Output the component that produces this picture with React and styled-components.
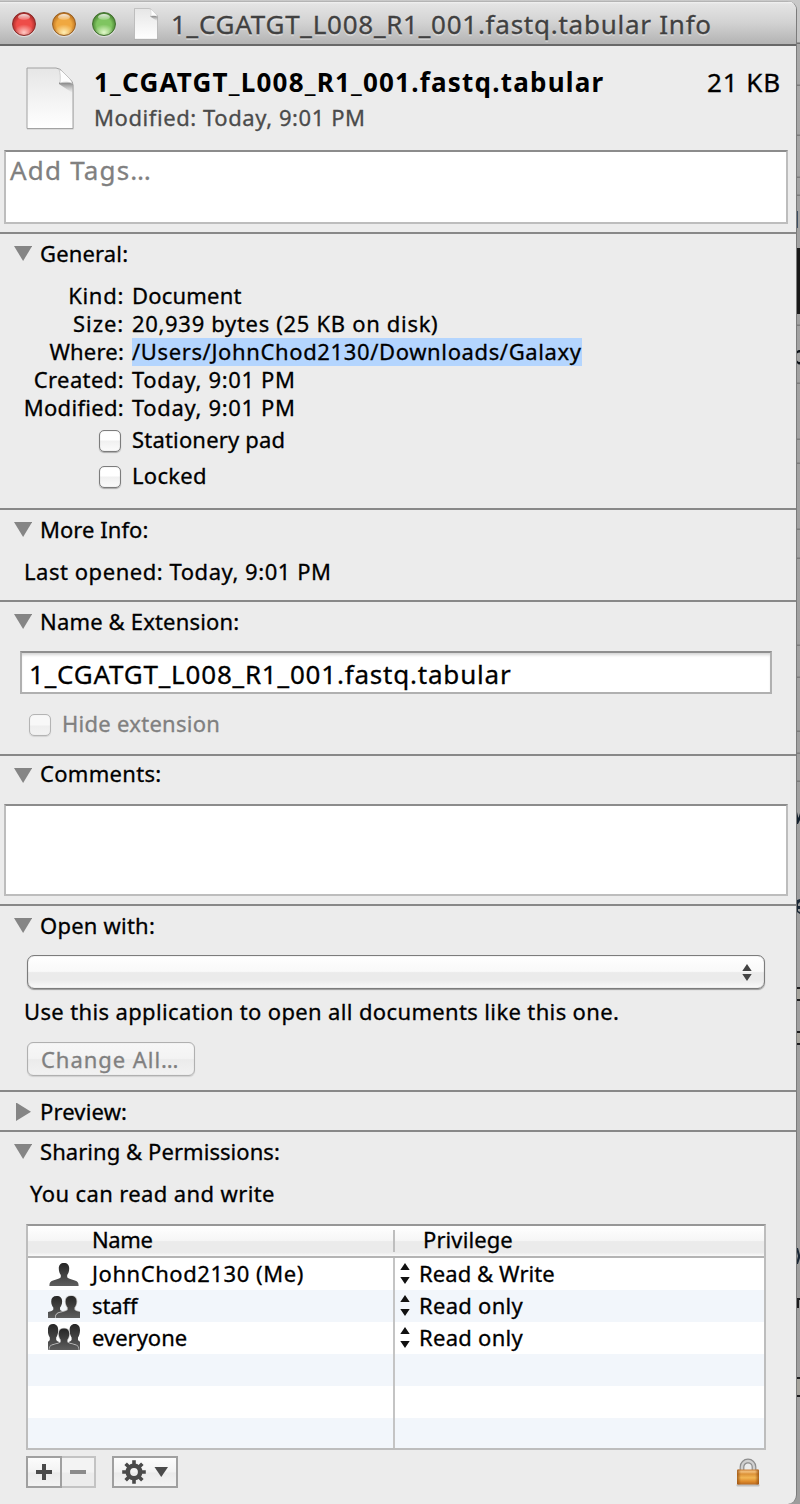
import React from 'react';
import styled, { createGlobalStyle, css } from 'styled-components';

const GlobalStyle = createGlobalStyle`
  * { box-sizing: border-box; }
  body { margin: 0; background: #c6c6c6; }
`;

const Desktop = styled.div`
  display: flex;
  width: 800px;
  height: 1504px;
  overflow: hidden;
  padding-top: 1px;
  background: linear-gradient(#c9c9c9 0, #c4c4c4 42px, #a9a9a9 44px, #a2a2a2 200px, #9d9d9d 100%);
  font-family: 'Noto Sans', 'Open Sans', sans-serif;
  color: #000;
  -webkit-text-stroke: 0.3px;
`;

const Window = styled.main`
  flex: none;
  display: flex;
  flex-direction: column;
  width: 797px;
  height: 1503px;
  background: #ececec;
  border-right: 1px solid #7b7b7b;
  border-radius: 0 9px 9px 0;
  overflow: hidden;
`;

const Behind = styled.svg`
  flex: none;
  display: block;
  margin-top: -1px;
`;

const Text = styled.span`
  display: block;
  white-space: nowrap;
  font-size: ${(p) => (p.$large ? 26 : 22)}px;
  line-height: ${(p) => (p.$large ? 32 : 28)}px;
  letter-spacing: ${(p) => p.$track || 0}px;
  color: ${(p) => p.$color || 'inherit'};
`;

const TitleBar = styled.header`
  flex: none;
  display: flex;
  height: 45px;
  padding-left: 12px;
  border-top: 1px solid #b4b4b4;
  border-bottom: 2px solid #686868;
  background: linear-gradient(#f2f2f2 0, #e4e4e4 2px, #d2d2d2 50%, #b3b3b3 100%);
`;

const Lights = styled.div`
  display: flex;
  gap: 16px;
  margin-top: 10px;
  width: 122px;
`;

const lights = {
  red: ['#8c2a28', '#a92d2b', '#ee4c48', '#ffc9c4'],
  amber: ['#986023', '#bd7422', '#f0a840', '#ffeeb4'],
  green: ['#42702f', '#4b8534', '#7fc560', '#e2f8cb'],
};

const Light = styled.i`
  position: relative;
  width: 24px;
  height: 24px;
  border-radius: 50%;
  border: 1px solid ${(p) => lights[p.$tone][0]};
  background: radial-gradient(ellipse 10px 8px at 50% 88%, ${(p) => lights[p.$tone][3]} 0, transparent 100%),
    radial-gradient(circle at 50% 55%, ${(p) => lights[p.$tone][2]} 45%, ${(p) => lights[p.$tone][1]} 72%);
  box-shadow: 0 1px 1px rgba(255, 255, 255, 0.6);

  &::before {
    content: '';
    position: absolute;
    left: 5px;
    top: 1px;
    width: 12px;
    height: 6px;
    border-radius: 50%;
    background: linear-gradient(rgba(255, 255, 255, 0.85), rgba(255, 255, 255, 0.15));
  }
`;

const TitleText = styled(Text)`
  margin: 6px 0 0 13px;
  color: #414141;
  text-shadow: 0 2px 0 rgba(255, 255, 255, 0.35);
`;

const TitleIcon = styled.div`
  margin-top: 6px;
`;

const Summary = styled.section`
  display: flex;
  height: 104px;
  padding: 20px 15px 0 26px;
`;

const SummaryIcon = styled.div`
  margin-top: 1px;
  width: 68px;
`;

const SummaryText = styled.div`
  flex: 1;
  display: flex;
  flex-direction: column;
  gap: 5px;
`;

const FileName = styled(Text)`
  font-weight: 700;
  -webkit-text-stroke: 0;
`;

const TextArea = styled.div`
  height: ${(p) => p.$height}px;
  margin: ${(p) => p.$top || 0}px 8px 0 4px;
  padding: 2px 4px;
  background: #fff;
  border: 2px solid #bdbdbd;
  border-top-color: #8c8c8c;
`;

const Section = styled.section`
  flex: none;
  height: ${(p) => p.$height}px;
  margin-top: ${(p) => p.$gap || 0}px;
  padding-top: 5px;
  border-top: 2px solid #888;
`;

const HeadingRow = styled.div`
  display: flex;
  gap: 8px;
  height: 28px;
  padding-left: 14px;

  svg { flex: none; margin-top: 6px; }
  span { margin-top: ${(p) => p.$raise || 0}px; }
`;

const Fields = styled.dl`
  display: grid;
  grid-template-columns: 124px auto;
  justify-content: start;
  justify-items: start;
  column-gap: 8px;
  grid-auto-rows: 28px;
  margin: 15px 0 0;
`;

const Label = styled(Text).attrs({ as: 'dt' })`
  justify-self: end;
  line-height: 26px;
`;

const Value = styled(Text).attrs({ as: 'dd' })`
  margin: 0;
  height: 28px;
  line-height: 26px;
  ${(p) => p.$selected && css`background: #b4d5fe;`}
`;

const CheckRow = styled.label`
  display: flex;
  gap: 11px;
  height: 36px;
  padding: 3px 0 0 ${(p) => p.$indent}px;
`;

const CheckBox = styled.i`
  width: 22px;
  height: 22px;
  margin-top: 5px;
  border: 1px solid ${(p) => (p.$disabled ? '#b4b4b4' : '#7c7c7c')};
  border-radius: 5px;
  background: ${(p) =>
    p.$disabled
      ? 'linear-gradient(#f8f8f8 50%, #eee 55%, #f3f3f3)'
      : 'linear-gradient(#fff 45%, #f0f0f0 50%, #fbfbfb)'};
  box-shadow: 0 1px 1px rgba(0, 0, 0, ${(p) => (p.$disabled ? 0.1 : 0.28)}),
    inset 0 0 1px rgba(0, 0, 0, ${(p) => (p.$disabled ? 0.15 : 0.35)});
`;

const Line = styled(Text)`
  margin: ${(p) => p.$top}px 0 0 ${(p) => p.$left || 24}px;
`;

const NameField = styled.div`
  width: 752px;
  height: 43px;
  margin: 16px 0 12px 20px;
  padding: 5px 7px;
  background: #fff;
  border: 2px solid #b0b0b0;
  border-top-color: #8f8f8f;
  box-shadow: inset 0 3px 3px -1px rgba(0, 0, 0, 0.17);
`;

const PopUp = styled.div`
  display: flex;
  justify-content: flex-end;
  align-items: center;
  width: 738px;
  height: 34px;
  margin: 16px 0 0 27px;
  padding-right: 12px;
  border: 1px solid #7c7c7c;
  border-radius: 7px;
  background: linear-gradient(#fff 0, #f9f9f9 48%, #ebebeb 52%, #ebebeb 75%, #fafafa 100%);
  box-shadow: 0 1px 1px rgba(0, 0, 0, 0.35), inset 0 0 1px rgba(0, 0, 0, 0.45);
`;

const PushButton = styled.button`
  display: block;
  width: 168px;
  height: 34px;
  margin: 17px 0 0 27px;
  padding: 0 0 0 13px;
  text-align: left;
  font-family: inherit;
  border: 1px solid #b0b0b0;
  border-radius: 6px;
  background: linear-gradient(#f7f7f7 0, #f3f3f3 48%, #ebebeb 52%, #f2f2f2 100%);
  box-shadow: 0 1px 1px rgba(0, 0, 0, 0.12), inset 0 0 1px rgba(0, 0, 0, 0.2);
`;

const Table = styled.div`
  width: 740px;
  height: 226px;
  margin: 17px 0 6px 26px;
  border: 2px solid #bdbdbd;
  border-top-color: #979797;
  overflow: hidden;
  background: #fff;
`;

const TableHead = styled.div`
  display: flex;
  height: 32px;
  border-bottom: 2px solid #b4b4b4;
  background: linear-gradient(#fff 0, #f6f6f6 48%, #ebebeb 52%, #ebebeb 88%, #fafafa 100%);

  span { line-height: 26px; }
`;

const HeadName = styled.div`
  width: 367px;
  height: 22px;
  margin-top: 4px;
  padding-left: 64px;
  border-right: 2px solid #bebebe;

  span { margin-top: -4px; }
`;

const HeadPrivilege = styled.div`
  padding-left: 28px;
`;

const Row = styled.div`
  display: flex;
  height: 32px;
  background: ${(p) => (p.$alt ? '#f2f6fb' : '#fff')};

  span { margin-top: 1px; }
`;

const NameCell = styled.div`
  display: flex;
  width: 367px;
  padding-left: 20px;
  border-right: 2px solid #c4c4c4;

  svg { flex: none; width: 32px; margin-right: 12px; }
`;

const PrivilegeCell = styled.div`
  display: flex;
  padding-left: 5px;
  gap: 9px;

  svg { margin-top: 5px; }
`;

const Footer = styled.div`
  display: flex;
  height: 34px;
  padding: 0 35px 0 26px;
`;

const ToolButton = styled.button`
  display: flex;
  align-items: center;
  justify-content: center;
  width: ${(p) => p.$width}px;
  height: 32px;
  padding: 0;
  border: 2px solid ${(p) => (p.$dim ? '#c3c3c3' : '#a0a0a0')};
  ${(p) => p.$dim && css`border-left: 0;`}
  margin-right: ${(p) => p.$after || 0}px;
  background: ${(p) =>
    p.$dim ? 'linear-gradient(#f3f3f3 50%, #ececec 54%)' : 'linear-gradient(#fcfcfc, #f3f3f3 48%, #ebebeb 54%, #f3f3f3)'};
`;

const LockHolder = styled.div`
  margin: 2px 0 0 auto;
`;

const Disclosure = ({ closed }) => (
  <svg width="18" height="18" viewBox="0 0 18 18">
    <path d={closed ? 'M2 -.6V18L17 8.7Z' : 'M0 1H18.2L9.1 16Z'} fill="#858585" />
  </svg>
);

const Heading = ({ children, track, closed, raise }) => (
  <HeadingRow $raise={raise}>
    <Disclosure closed={closed} />
    <Text $track={track}>{children}</Text>
  </HeadingRow>
);

const DocIcon = ({ width, height, id }) => (
  <svg width={width} height={height} viewBox="0 0 48 63" preserveAspectRatio="none" overflow="visible">
    <defs>
      <linearGradient id={id} x1="0" y1="0" x2="0" y2="1">
        <stop offset="0" stopColor="#e6e6e6" />
        <stop offset="1" stopColor="#fff" />
      </linearGradient>
      <linearGradient id={id + 's'} x1="0" y1="0" x2="0" y2="1">
        <stop offset="0" stopColor="#555" stopOpacity=".7" />
        <stop offset="1" stopColor="#999" stopOpacity="0" />
      </linearGradient>
    </defs>
    <path d="M1 2.5H31L47.5 18V62.5H1Z" fill="#000" opacity=".16" />
    <path d="M1 1H30Q34 1 38 6L44 12Q47 15 47 18V61.5H1Z" fill={`url(#${id})`} stroke="#a2a2a2" strokeWidth="1" />
    <path d="M33 15.500H46.600V26L33 17Z" fill={`url(#${id}s)`} />
    <path d="M33 2.500C34.500 6 34.500 11 34 16C38 14.800 43 14.800 46.500 16.500Q45.500 14 44 12L38 6Q35.500 3 33 2.500Z" fill="#fdfdfd" stroke="#bbb" strokeWidth=".6" />
  </svg>
);

const Arrows = ({ gap, color }) => (
  <svg width="10" height={14 + gap} viewBox={`0 0 10 ${14 + gap}`}>
    <path d={`M5 0L9.700 7H.3ZM.3 ${7 + gap}H9.700L5 ${14 + gap}Z`} fill={color} />
  </svg>
);

const BUST =
  'M9.600 0C13 0 14.800 2 14.800 5.600C14.800 8.500 13.800 10.600 12.800 12V14C13.200 16.200 19.500 16.600 22.300 18.200C24 19.400 24.200 21 24.200 23H-5C-5 21-4.800 19.400-3.100 18.200C-.3 16.600 6 16.200 6.400 14V12C5.400 10.600 4.400 8.500 4.400 5.600C4.400 2 6.200 0 9.600 0Z';

const Bust = ({ x, y, sx = 1, sy = 1, outline }) => (
  <path
    d={BUST}
    transform={`translate(${x} ${y}) scale(${sx} ${sy})`}
    fill="url(#bust)"
    stroke={outline ? '#c4c4c4' : 'none'}
    strokeWidth={outline ? 1.6 : 0}
    paintOrder="stroke"
  />
);

const People = ({ count }) => (
  <svg width="32" height="32" viewBox="0 0 32 32">
    <defs>
      <linearGradient id="bust" x1="0" y1="0" x2="0" y2="1">
        <stop offset="0" stopColor="#262626" />
        <stop offset="1" stopColor="#5e5e5e" />
      </linearGradient>
      <clipPath id="peopleBox"><rect width="32" height="28" /></clipPath>
    </defs>
    <g clipPath="url(#peopleBox)">
      {count === 1 && <Bust x={6.4} y={5} />}
      {count === 2 && (
        <>
          <Bust x={-1.4} y={6} sx={1.05} sy={0.96} />
          <Bust x={13} y={6} sx={1.05} sy={0.96} outline />
        </>
      )}
      {count === 3 && (
        <>
          <Bust x={-4.600} y={2} sx={1} sy={1.130} />
          <Bust x={17.200} y={2} sx={1} sy={1.130} />
          <Bust x={6.400} y={6.500} sx={1} sy={0.940} outline />
        </>
      )}
    </g>
  </svg>
);

const Plus = () => (
  <svg width="16" height="16"><path d="M6 0h4v6h6v4h-6v6H6v-6H0V6h6Z" fill="#4a4a4a" /></svg>
);
const Minus = () => (
  <svg width="16" height="4"><path d="M0 0h16v4H0Z" fill="#8b8b8b" /></svg>
);

const Gear = () => (
  <svg width="46" height="24" viewBox="0 0 46 24">
    <g fill="#4a4a4a">
      {[0, 45, 90, 135].map((a) => (
        <path key={a} transform={`rotate(${a} 12 12)`} d="M10.200 .2h3.600v6h-3.600ZM10.200 17.800h3.600v6h-3.600Z" />
      ))}
    </g>
    <circle cx="12" cy="12" r="6.200" fill="none" stroke="#4a4a4a" strokeWidth="4.600" />
    <path d="M32.500 7H46L39.250 17Z" fill="#4a4a4a" />
  </svg>
);

const Lock = () => (
  <svg width="26" height="30" viewBox="0 0 26 30">
    <defs>
      <linearGradient id="brass" x1="0" y1="0" x2="0" y2="1">
        <stop offset="0" stopColor="#c98038" />
        <stop offset=".15" stopColor="#f3c07c" />
        <stop offset=".3" stopColor="#dc9238" />
        <stop offset=".55" stopColor="#f2b654" />
        <stop offset=".8" stopColor="#dd8a2b" />
        <stop offset="1" stopColor="#b9691f" />
      </linearGradient>
      <linearGradient id="brassEdge" x1="0" y1="0" x2="1" y2="0">
        <stop offset="0" stopColor="#9a5312" stopOpacity=".85" />
        <stop offset=".18" stopColor="#9a5312" stopOpacity="0" />
        <stop offset=".82" stopColor="#9a5312" stopOpacity="0" />
        <stop offset="1" stopColor="#9a5312" stopOpacity=".85" />
      </linearGradient>
    </defs>
    <rect x="1.500" y="26" width="23" height="2.500" rx="1" fill="#000" opacity=".18" />
    <path d="M7 12.500V9a6 6 0 0 1 12 0V12.500" fill="none" stroke="#8d8d8d" strokeWidth="4.800" />
    <path d="M7 12.500V9a6 6 0 0 1 12 0V12.500" fill="none" stroke="#d0d0d0" strokeWidth="2.400" />
    <rect x="2" y="11.500" width="22" height="15" rx="1.200" fill="url(#brass)" />
    <rect x="2" y="11.500" width="22" height="15" rx="1.200" fill="url(#brassEdge)" />
  </svg>
);

const EDGES = [85, 135, 177, 195, 325, 383, 439, 463, 529, 558, 645, 677, 731, 753, 781];
const FRAMES = [988, 1032, 1378];

const Backdrop = () => (
  <Behind width="3" height="1504" viewBox="0 0 3 1504">
    <path d="M0 42.500h3v1.500H0Z" fill="#707070" />
    {EDGES.map((y) => <path key={y} d={`M0 ${y - 0.5}h3v1.500H0Z`} fill="#7d7d7d" />)}
    <path d="M0 211h1v17H0Z" fill="#3f5064" />
    <path d="M0 248h3v66H0Z" fill="#191919" />
    {FRAMES.map((y) => (
      <g key={y}>
        <path d={`M0 ${y}h3v${y > 1300 ? 17 : 12}H0Z`} fill="#a5a39c" />
        <path d={`M0 ${y - 1}h3v2H0ZM0 ${y + (y > 1300 ? 17 : 11)}h3v2H0Z`} fill="#1c1c1e" />
      </g>
    ))}
    <path d="M0 351q1.500-1.500 3-1v2.500q-2-.2-3 1ZM0 363q1 1.500 3 1.500v-2.500q-2 0-3-1.500Z" fill="#0c1218" />
    <path d="M0 812l1.500 6 1.500-5v7l-2 4H0Z" fill="#14212e" />
    <path d="M0 900l3-1v3l-2 2v2h2v3H1v2l2 1v2l-3-2Z" fill="#1b2836" />
    <path d="M0 1248h1l2 7v3l-2 6H0v-4l1-4-1-4Z" fill="#1b2836" />
    <path d="M0 1298h3v2H2v8H0Z" fill="#1c1c1e" />
  </Behind>
);

const DETAILS = [
  ['Kind:', 0.7, 'Document', 0.2],
  ['Size:', 0.9, '20,939 bytes (25 KB on disk)', 0.68],
  ['Where:', 0.2, '/Users/JohnChod2130/Downloads/Galaxy', 0.63, true],
  ['Created:', 0.4, 'Today, 9:01 PM', 0.66],
  ['Modified:', 0.3, 'Today, 9:01 PM', 0.66],
];

const PERMISSIONS = [
  [1, 'JohnChod2130 (Me)', 0.55, 'Read & Write', 0.08],
  [2, 'staff', -0.1, 'Read only', 0.28],
  [3, 'everyone', 0, 'Read only', 0.28],
  null,
  null,
  null,
];

export default function App() {
  return (
    <Desktop>
      <GlobalStyle />
      <Window>
        <TitleBar>
          <Lights>
            <Light $tone="red" />
            <Light $tone="amber" />
            <Light $tone="green" />
          </Lights>
          <TitleIcon><DocIcon width={24} height={32} id="docSmall" /></TitleIcon>
          <TitleText $large $track={0.75}>1_CGATGT_L008_R1_001.fastq.tabular Info</TitleText>
        </TitleBar>

        <Summary>
          <SummaryIcon><DocIcon width={48} height={63} id="docLarge" /></SummaryIcon>
          <SummaryText>
            <FileName $large $track={1.22}>1_CGATGT_L008_R1_001.fastq.tabular</FileName>
            <Text $track={0.58} $color="#4b4b4b">Modified: Today, 9:01 PM</Text>
          </SummaryText>
          <Text $large $track={0.9}>21 KB</Text>
        </Summary>
        <TextArea $height={74}>
          <Text $large $track={1.2} $color="#808080">Add Tags…</Text>
        </TextArea>

        <Section $height={276} $gap={8}>
          <Heading track={0.15}>General:</Heading>
          <Fields>
            {DETAILS.map(([label, labelTrack, value, track, selected]) => (
              <React.Fragment key={label}>
                <Label $track={labelTrack}>{label}</Label>
                <Value $track={track} $selected={selected}>{value}</Value>
              </React.Fragment>
            ))}
          </Fields>
          <CheckRow $indent={99}>
            <CheckBox />
            <Text $track={0.18}>Stationery pad</Text>
          </CheckRow>
          <CheckRow $indent={99}>
            <CheckBox />
            <Text $track={0.3}>Locked</Text>
          </CheckRow>
        </Section>

        <Section $height={92}>
          <Heading track={0.05}>More Info:</Heading>
          <Line $top={14} $track={0.54}>Last opened: Today, 9:01 PM</Line>
        </Section>

        <Section $height={154}>
          <Heading track={0.17}>Name &amp; Extension:</Heading>
          <NameField><Text $large $track={0.8}>1_CGATGT_L008_R1_001.fastq.tabular</Text></NameField>
          <CheckRow $indent={29}>
            <CheckBox $disabled />
            <Text $track={0.28} $color="#808080">Hide extension</Text>
          </CheckRow>
        </Section>

        <Section $height={150}>
          <Heading track={0.3} raise={-2}>Comments:</Heading>
          <TextArea $height={92} $top={15} />
        </Section>

        <Section $height={186}>
          <Heading track={0.22}>Open with:</Heading>
          <PopUp><Arrows gap={3} color="#444" /></PopUp>
          <Line $top={8} $track={0.36}>Use this application to open all documents like this one.</Line>
          <PushButton>
            <Text $track={0.95} $color="#808080">Change All…</Text>
          </PushButton>
        </Section>

        <Section $height={40}>
          <Heading closed track={0.15}>Preview:</Heading>
        </Section>

        <Section $height={373}>
          <Heading track={0.06}>Sharing &amp; Permissions:</Heading>
          <Line $top={14} $left={30} $track={0.38}>You can read and write</Line>
          <Table>
            <TableHead>
              <HeadName><Text $track={-0.4}>Name</Text></HeadName>
              <HeadPrivilege><Text $track={0.1}>Privilege</Text></HeadPrivilege>
            </TableHead>
            {PERMISSIONS.map((entry, i) => (
              <Row key={i} $alt={i % 2 === 1}>
                <NameCell>
                  {entry && <People count={entry[0]} />}
                  {entry && <Text $track={entry[2]}>{entry[1]}</Text>}
                </NameCell>
                {entry && (
                  <PrivilegeCell>
                    <Arrows gap={7} color="#111" />
                    <Text $track={entry[4]}>{entry[3]}</Text>
                  </PrivilegeCell>
                )}
              </Row>
            ))}
          </Table>
          <Footer>
            <ToolButton $width={36}><Plus /></ToolButton>
            <ToolButton $width={34} $dim $after={16}><Minus /></ToolButton>
            <ToolButton $width={66}><Gear /></ToolButton>
            <LockHolder><Lock /></LockHolder>
          </Footer>
        </Section>
      </Window>
      <Backdrop />
    </Desktop>
  );
}
